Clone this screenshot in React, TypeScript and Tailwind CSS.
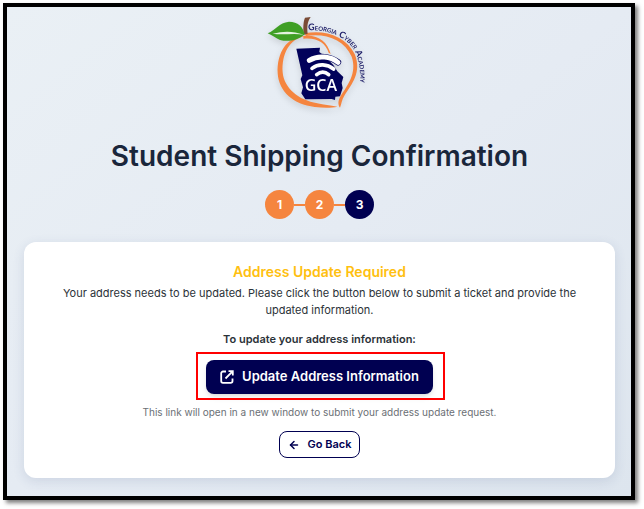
import { ArrowLeft } from "lucide-react";

const steps = [
  { id: 1, done: true },
  { id: 2, done: true },
  { id: 3, done: false },
];

function Logo() {
  return (
    <svg
      viewBox="30 18 324 300"
      className="h-[100px] w-[108px] drop-shadow-md"
      role="img"
      aria-label="Georgia Cyber Academy"
    >
      <defs>
        <path id="logo-arc" d="M156 66 C232 65 292 96 306 156 C313 182 315 205 309 260" />
      </defs>
      {/* peach */}
      <g fill="#f5853f">
        <path d="M150 84 C92 84 62 135 65 196 C68 250 112 290 176 297 C202 300 228 300 244 296 C222 292 204 290 184 286 C128 277 84 240 80 193 C77 140 98 92 150 84 Z" />
        <path d="M142 84 C182 78 214 98 224 138 L218 134 C208 104 184 88 142 92 Z" />
        <path d="M146 76 C205 64 270 84 296 138 C318 192 288 228 265 263 C257 276 257 286 252 299 C245 290 246 277 254 264 C274 232 304 196 287 146 C265 94 206 74 150 84 Z" />
      </g>
      {/* stem and leaf */}
      <path d="M143 80 C141 58 142 40 147 29 L164 27 C153 42 153 60 155 77 Z" fill="#7a4b36" />
      <path d="M35 76 C60 66 68 44 99 41 C126 41 141 56 146 79 C126 98 96 102 72 96 C60 91 50 82 35 76 Z" fill="#3f9f25" />
      <path d="M50 77 C83 82 112 74 143 80 C112 69 85 68 50 77 Z" fill="#e4f2e0" />
      {/* state */}
      <path
        d="M121 122 L192 119 L190 132 L208 146 L232 171 L244 190 L262 207 L257 225 L260 240 L252 265 L238 266 L237 276 L227 273 L148 274 L136 256 L141 238 L134 213 L139 202 Z"
        fill="#02025a"
      />
      {/* wifi */}
      <g fill="none" strokeLinecap="round">
        <path d="M160 157 C188 140 225 146 246 163" stroke="#02025a" strokeWidth="19" />
        <path d="M160 157 C188 140 225 146 246 163" stroke="#fff" strokeWidth="15" />
        <path d="M168 181 C187 166 214 168 233 183" stroke="#fff" strokeWidth="11" />
        <path d="M182 200 C194 190 207 190 218 200" stroke="#fff" strokeWidth="11" />
      </g>
      <text x="146" y="249" fontSize="48" fill="#fff" className="font-['Open_Sans',sans-serif] font-semibold">
        GCA
      </text>
      <text
        fontSize="27"
        fill="#1c1c66"
        className="font-['Lato',sans-serif] font-bold [font-variant-caps:small-caps]"
      >
        <textPath href="#logo-arc">Georgia Cyber Academy</textPath>
      </text>
    </svg>
  );
}

function ExternalIcon() {
  return (
    <svg
      viewBox="0 0 14 14"
      className="size-3.5"
      fill="none"
      stroke="currentColor"
      strokeWidth="1.8"
      aria-hidden="true"
    >
      <path d="M6 1.500H3A1.800 1.800 0 0 0 1.200 3.300V11A1.800 1.800 0 0 0 3 12.800H10.700A1.800 1.800 0 0 0 12.500 11V8.500" />
      <path d="M8.500 1.200H12.800V5.500M12.800 1.200L5.500 8.500" />
    </svg>
  );
}

export default function App() {
  return (
    <div className="bg-white pt-[3px] pr-[9px] pb-[9px] pl-[3px] font-['Inter',sans-serif]">
      <main className="flex flex-col items-center border-4 border-black bg-linear-to-br from-[#eaf0f5] via-[#e5ebf3] to-[#dde5ee] pt-[7px] pr-4 pb-[18px] pl-[17px] shadow-[3px_3px_4px_rgba(0,0,0,0.5)]">
        <Logo />
        <h1 className="mt-6 text-center text-[28px] leading-9 font-semibold text-[#1a263b]">
          Student Shipping Confirmation
        </h1>

        <ol className="mt-4 flex items-center">
          {steps.map((step, i) => (
            <li key={step.id} className="flex items-center">
              {i > 0 && <span className="h-0.5 w-[11px] bg-[#f5853f]" />}
              <span
                className={`flex size-[29px] items-center justify-center rounded-full text-xs font-bold text-white ${
                  step.done ? "bg-[#f5853f]" : "bg-[#000051]"
                }`}
              >
                {step.id}
              </span>
            </li>
          ))}
        </ol>

        <section className="mt-[23px] flex w-full flex-col items-center rounded-xl bg-white px-6 py-5 text-center shadow-[0_3px_12px_rgba(60,80,130,0.14)]">
          <h2 className="text-sm leading-[19px] font-semibold text-[#ffc010]">
            Address Update Required
          </h2>
          <p className="mt-1 px-1 text-[11px] leading-[17px] text-[#2b3238]">
            Your address needs to be updated. Please click the button below to submit a ticket and
            provide the updated information.
          </p>
          <p className="mt-3 text-[11px] leading-[17px] font-semibold text-[#2b3238]">
            To update your address information:
          </p>
          <div className="relative mt-3">
            <button
              type="button"
              className="flex h-[34px] items-center gap-2 rounded-lg bg-[#000051] px-3.5 text-[13px] font-semibold text-white shadow-md"
            >
              <ExternalIcon />
              Update Address Information
            </button>
            {/* callout frame round the button */}
            <span className="pointer-events-none absolute -top-2 -right-3 -bottom-1.5 -left-2.5 border-2 border-[#ff0000]" />
          </div>
          <p className="mt-2.5 text-[10px] leading-4 text-[#6b7075]">
            This link will open in a new window to submit your address update request.
          </p>
          <button
            type="button"
            className="mt-[11px] flex h-[27px] items-center gap-2 rounded-lg border border-[#000051] px-2 text-[11px] font-semibold text-[#000051]"
          >
            <ArrowLeft className="size-3" strokeWidth={3} />
            Go Back
          </button>
        </section>
      </main>
    </div>
  );
}
